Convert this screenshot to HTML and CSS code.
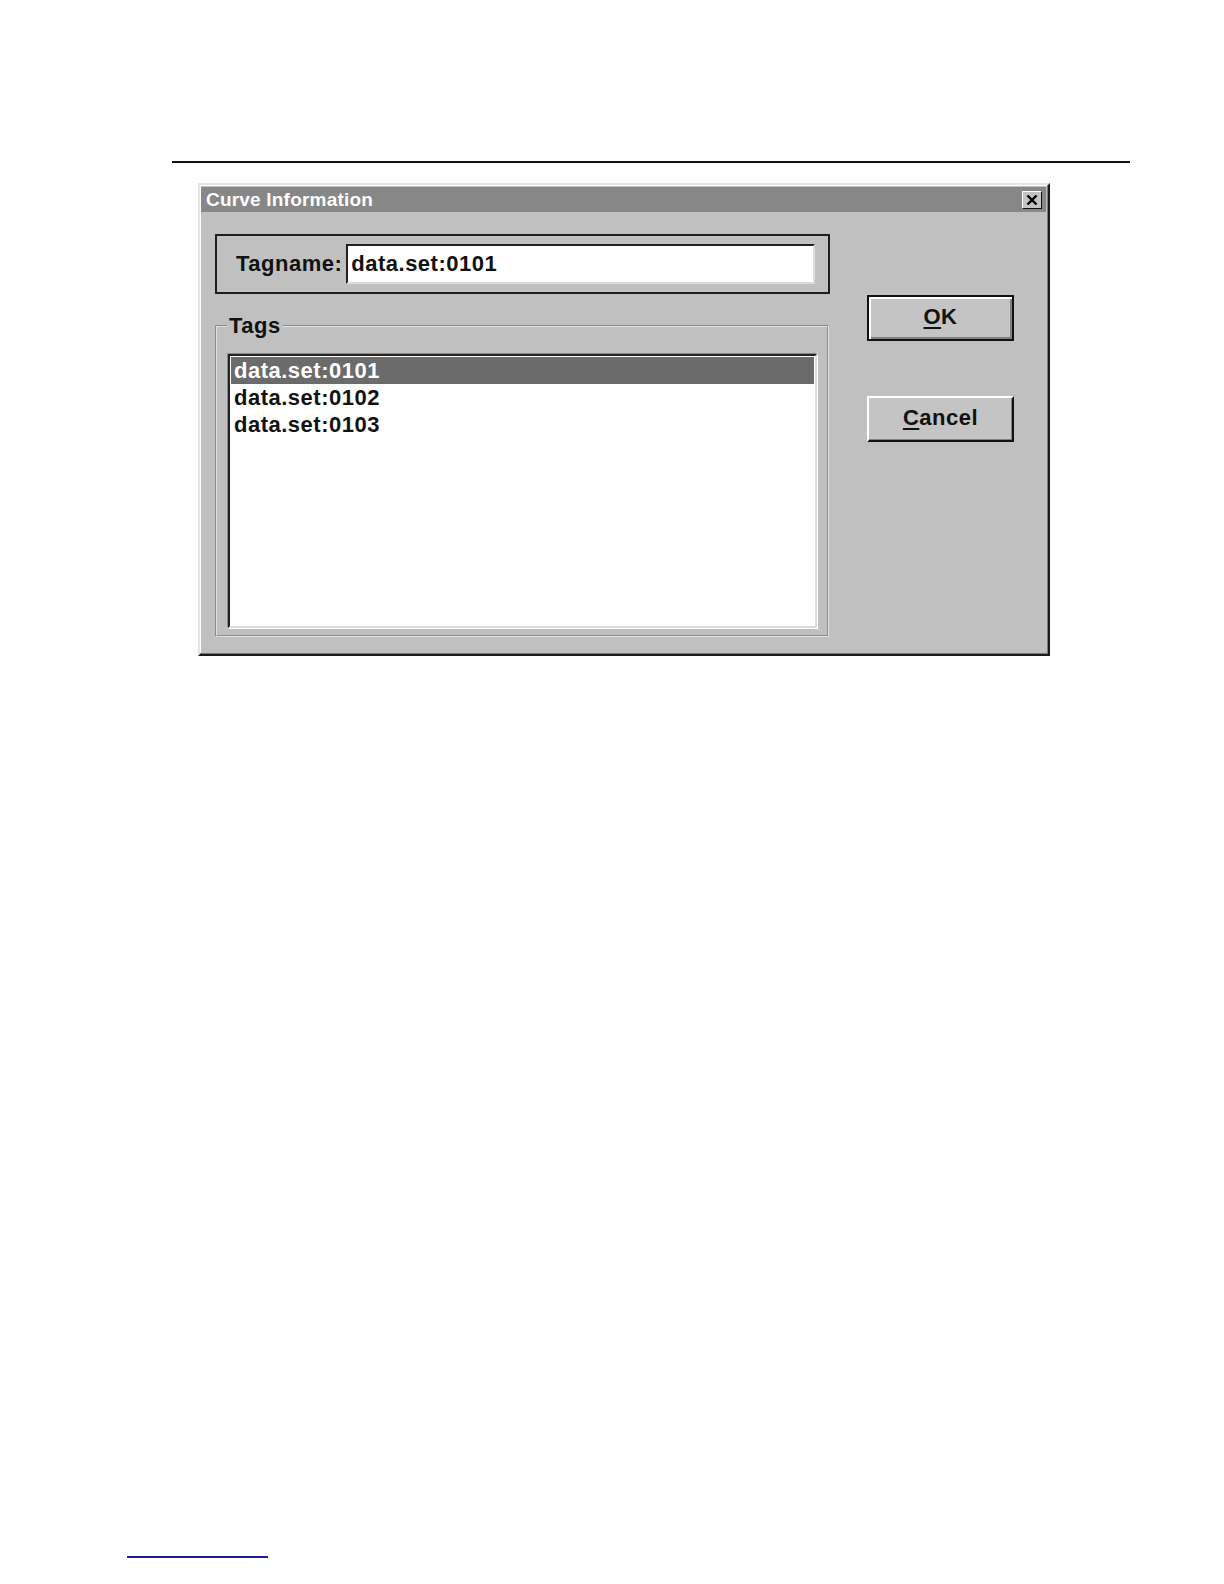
FILE: index.html
```html
<!DOCTYPE html>
<html>
<head>
<meta charset="utf-8">
<title>Curve Information</title>
<link rel="stylesheet" href="styles.css">
</head>
<body>
<div class="page">
  <div class="rule"></div>
  <div class="dialog">
    <div class="titlebar">
      <span class="title">Curve Information</span>
      <span class="close"><svg width="12" height="10" viewBox="0 0 12 10"><path d="M1.5 0.5 L10.5 9.5 M10.5 0.5 L1.5 9.5" stroke="#000" stroke-width="2.4"/></svg></span>
    </div>
    <div class="body">
      <div class="left">
        <div class="tagbox">
          <span class="label">Tagname:</span>
          <div class="input">data.set:0101</div>
        </div>
        <fieldset class="tags">
          <legend>Tags</legend>
          <div class="list">
            <div class="row selected">data.set:0101</div>
            <div class="row">data.set:0102</div>
            <div class="row">data.set:0103</div>
          </div>
        </fieldset>
      </div>
      <div class="buttons">
        <div class="btn default"><span class="u">O</span>K</div>
        <div class="btn"><span class="u">C</span>ancel</div>
      </div>
    </div>
  </div>
  <div class="footline"></div>
</div>
</body>
</html>
```
FILE: styles.css
```css
* { box-sizing: border-box; }
html, body { margin: 0; padding: 0; background: #fff; }
body { font-family: "Liberation Sans", Arial, sans-serif; }
.page { width: 1224px; padding-top: 161px; }
.rule { margin-left: 172px; width: 958px; height: 2px; background: #111; }
.dialog {
  margin-left: 198px;
  margin-top: 20px;
  width: 852px;
  height: 473px;
  background: #c0c0c0;
  border-top: 2px solid #e4e4e4;
  border-left: 2px solid #e4e4e4;
  border-right: 2px solid #1a1a1a;
  border-bottom: 2px solid #1a1a1a;
  box-shadow: inset -1px -1px 0 #7a7a7a, inset 1px 1px 0 #fff;
  padding: 2px 2px 0 1px;
}
.titlebar {
  height: 25px;
  background: #878787;
  display: flex;
  align-items: center;
  justify-content: space-between;
  padding: 0 4px 0 5px;
}
.title {
  color: #fff;
  font-weight: bold;
  font-size: 19px;
  letter-spacing: 0.2px;
}
.close {
  width: 20px;
  height: 18px;
  background: #c4c4c4;
  border-top: 1px solid #fff;
  border-left: 1px solid #fff;
  border-right: 1px solid #111;
  border-bottom: 1px solid #111;
  display: flex;
  align-items: center;
  justify-content: center;
}
.body {
  display: flex;
  padding: 22px 0 0 14px;
}
.left { width: 615px; }
.tagbox {
  height: 60px;
  border: 2px solid #1e1e1e;
  display: flex;
  align-items: center;
  padding-left: 19px;
}
.label, .input, .row, legend, .btn {
  font-weight: bold;
  font-size: 22px;
  letter-spacing: 0.5px;
  color: #111;
}
.input {
  margin-left: 4px;
  width: 469px;
  height: 40px;
  background: #fff;
  border-top: 2px solid #222;
  border-left: 2px solid #222;
  border-right: 2px solid #dcdcdc;
  border-bottom: 2px solid #dcdcdc;
  padding: 3px 0 0 3px;
  line-height: 30px;
}
.tags {
  margin: 20px 1px 0 0;
  padding: 16px 10px 6px 11px;
  border: 2px groove #e0e0e0;
  height: 323px;
}
legend {
  padding: 0 2px;
  margin-left: -1px;
  line-height: 24px;
}
.list {
  height: 274px;
  background: #fff;
  border-top: 2px solid #222;
  border-left: 2px solid #222;
  border-right: 2px solid #dcdcdc;
  border-bottom: 2px solid #dcdcdc;
  box-shadow: -1px -1px 0 #8a8a8a, 1px 1px 0 #fff;
  padding: 1px;
}
.row {
  height: 27px;
  line-height: 27px;
  padding-left: 3px;
}
.row.selected { background: #6b6b6b; color: #fff; }
.buttons {
  margin-left: 37px;
  padding-top: 61px;
  display: flex;
  flex-direction: column;
  gap: 55px;
}
.btn {
  width: 147px;
  height: 46px;
  background: #c4c4c4;
  border-top: 2px solid #fff;
  border-left: 2px solid #fff;
  border-right: 2px solid #111;
  border-bottom: 2px solid #111;
  box-shadow: inset -1px -1px 0 #808080;
  display: flex;
  align-items: center;
  justify-content: center;
  padding-bottom: 2px;
}
.btn.default {
  border: 2px solid #111;
  box-shadow: inset 2px 2px 0 #fff, inset -2px -2px 0 #808080;
}
.u { text-decoration: underline; text-underline-offset: 3px; text-decoration-thickness: 2px; }
.footline {
  margin-left: 127px;
  margin-top: 900px;
  width: 141px;
  height: 2px;
  background: #1c1c9c;
}
```
